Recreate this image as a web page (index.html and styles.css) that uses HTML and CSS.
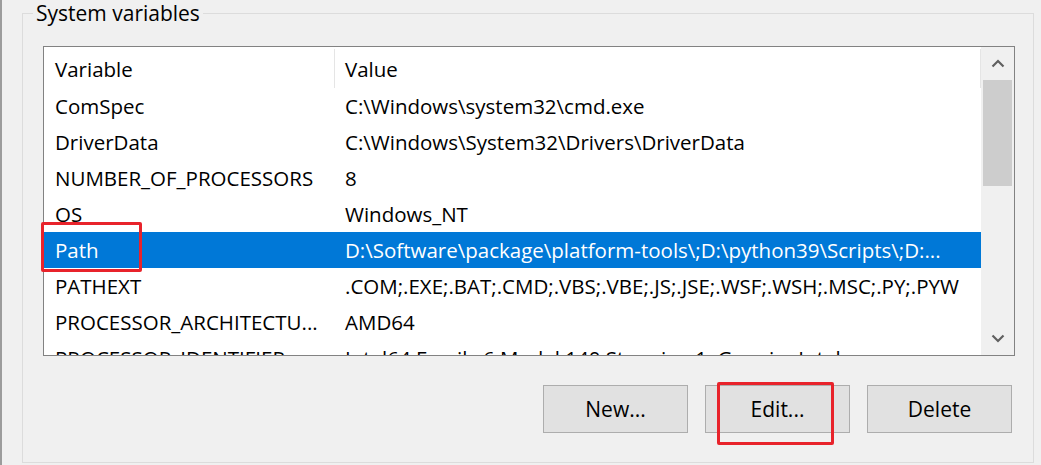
FILE: index.html
```
<!DOCTYPE html>
<html lang="en">
<head>
    <meta charset="UTF-8">
    <title>System variables</title>
    <link rel="stylesheet" href="styles.css">
</head>
<body>
    <fieldset class="group">
        <legend>System variables</legend>

        <div class="listview">
            <div class="list-body">
                <div class="row header">
                    <div class="cell">Variable</div>
                    <div class="cell">Value</div>
                </div>
                <div class="row">
                    <div class="cell">ComSpec</div>
                    <div class="cell">C:\Windows\system32\cmd.exe</div>
                </div>
                <div class="row">
                    <div class="cell">DriverData</div>
                    <div class="cell">C:\Windows\System32\Drivers\DriverData</div>
                </div>
                <div class="row">
                    <div class="cell">NUMBER_OF_PROCESSORS</div>
                    <div class="cell">8</div>
                </div>
                <div class="row">
                    <div class="cell">OS</div>
                    <div class="cell">Windows_NT</div>
                </div>
                <div class="row selected">
                    <div class="cell">Path</div>
                    <div class="cell">D:\Software\package\platform-tools\;D:\python39\Scripts\;D:...</div>
                </div>
                <div class="row">
                    <div class="cell">PATHEXT</div>
                    <div class="cell">.COM;.EXE;.BAT;.CMD;.VBS;.VBE;.JS;.JSE;.WSF;.WSH;.MSC;.PY;.PYW</div>
                </div>
                <div class="row">
                    <div class="cell">PROCESSOR_ARCHITECTU...</div>
                    <div class="cell">AMD64</div>
                </div>
                <div class="row">
                    <div class="cell">PROCESSOR_IDENTIFIER</div>
                    <div class="cell">Intel64 Family 6 Model 140 Stepping 1, GenuineIntel</div>
                </div>
            </div>

            <div class="scrollbar">
                <div class="arrow">
                    <svg width="14" height="9" viewBox="0 0 14 9"><polyline points="1.5,7.5 7,2 12.5,7.5" fill="none" stroke="#606060" stroke-width="2.2"/></svg>
                </div>
                <div class="track">
                    <div class="thumb"></div>
                </div>
                <div class="arrow">
                    <svg width="14" height="9" viewBox="0 0 14 9"><polyline points="1.5,1.5 7,7 12.5,1.5" fill="none" stroke="#606060" stroke-width="2.2"/></svg>
                </div>
            </div>

            <!-- annotation around the Path row -->
            <span class="mark mark-path"></span>
        </div>

        <div class="buttons">
            <button class="btn">New...</button>
            <button class="btn">Edit...<span class="mark mark-edit"></span></button>
            <button class="btn">Delete</button>
        </div>
    </fieldset>
</body>
</html>
```

FILE: styles.css
```
* {
    box-sizing: border-box;
}

body {
    margin: 0;
    height: 465px;
    overflow: hidden;
    background: #f0f0f0;
    border-left: 2px solid #9c9c9c;
    font-family: "Open Sans", "Noto Sans", sans-serif;
    font-size: 20.5px;
    color: #000;
}

.group {
    margin: 0 7px 0 20px;
    padding: 20px 18px 29px 20px;
    border: 1px solid #dcdcdc;
}

.group legend {
    margin-left: -10px;
    padding: 0 3px;
    line-height: 26px;
    font-size: 21px;
}

/* list view */
.listview {
    position: relative;
    display: flex;
    height: 310px;
    border: 1px solid #828282;
    background: #fff;
}

.list-body {
    flex: 1;
    overflow: hidden;
}

.row {
    display: grid;
    grid-template-columns: 291px 1fr;
    height: 36px;
    line-height: 36px;
    white-space: nowrap;
}

.row .cell {
    padding-left: 11px;
    overflow: hidden;
}

.row .cell + .cell {
    padding-left: 10px;
}

.row.header {
    height: 41px;
}

.row.header .cell {
    border-right: 1px solid #e5e5e5;
    margin-top: 2px;
    line-height: 40px;
}

.row.selected {
    background: #0078d7;
    color: #fff;
}

.scrollbar {
    width: 33px;
    display: flex;
    flex-direction: column;
    background: #f0f0f0;
}

.arrow {
    height: 33px;
    display: flex;
    align-items: center;
    justify-content: center;
}

.track {
    flex: 1;
    padding: 0 2px;
}

.thumb {
    height: 106px;
    background: #cdcdcd;
}

/* buttons */
.buttons {
    display: flex;
    justify-content: flex-end;
    gap: 17px;
    margin-top: 29px;
    padding-right: 3px;
}

.btn {
    position: relative;
    width: 145px;
    height: 48px;
    background: #e1e1e1;
    border: 1px solid #adadad;
    font-family: inherit;
    font-size: 21px;
    color: #000;
    padding: 0;
}

/* red annotation boxes */
.mark {
    position: absolute;
    border: 3px solid #e8232b;
    border-radius: 2px;
    pointer-events: none;
}

.mark-path {
    left: -3px;
    top: 175px;
    width: 101px;
    height: 50px;
}

.mark-edit {
    left: 11px;
    top: -4px;
    width: 117px;
    height: 63px;
}
```
